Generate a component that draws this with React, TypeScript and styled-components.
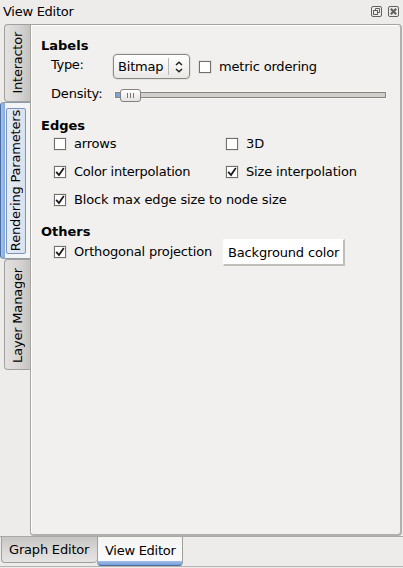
import React from "react";
import styled, { createGlobalStyle, css } from "styled-components";

const Global = createGlobalStyle`
  * { box-sizing: border-box; }
  html, body { margin: 0; padding: 0; background: #edeceb; overflow: hidden; }
  body { font-family: "DejaVu Sans", sans-serif; font-size: 13px; color: #000; line-height: 16px; }
`;

const Window = styled.div`
  width: 403px;
  height: 568px;
  display: flex;
  flex-direction: column;
  background: #edeceb;
  white-space: nowrap;
`;

const TitleBar = styled.header`
  height: 24px;
  padding: 0 3px 0 3px;
  display: flex;
  align-items: center;
  gap: 5px;
`;

const Text = styled.span<{ $track?: number }>`
  letter-spacing: ${(p) => p.$track ?? -0.19}px;
`;

const Title = styled(Text)`
  flex: 1;
`;

const Body = styled.div`
  height: 512px;
  display: flex;
  padding-right: 1px;
`;

const SideTabs = styled.nav`
  width: 31px;
  margin-right: -1px;
  display: flex;
  flex-direction: column;
  align-items: flex-end;
`;

const activeSide = css`
  width: 30px;
  margin-right: 1px;
  padding: 5px 4px 5px 1px;
  border: 1px solid #8e9bac;
  border-left-color: #4a6c9e;
  border-right: 0;
  border-radius: 4px 0 0 4px;
  background: linear-gradient(90deg, #a6c6f0 0, #82a8dc 4px, #f3f4f6 4px, #f3f4f6 100%);
`;

const idleSide = css`
  width: 27px;
  border: 1px solid #a2a19f;
  border-right-color: #9b9a98;
  border-radius: 4px 0 0 4px;
  background: linear-gradient(90deg, #e3e2e0, #d6d5d3 55%, #c5c4c1);
`;

const SideTab = styled.button<{ $active?: boolean; $h: number }>`
  height: ${(p) => p.$h}px;
  padding: 0;
  display: flex;
  align-items: center;
  justify-content: center;
  font: inherit;
  color: inherit;
  ${(p) => (p.$active ? activeSide : idleSide)}
`;

const Vertical = styled(Text)<{ $drop?: number }>`
  writing-mode: vertical-rl;
  transform: rotate(180deg);
  line-height: 16px;
  padding-bottom: ${(p) => p.$drop ?? 0}px;
`;

const FocusFrame = styled.span`
  width: 20px;
  height: 146px;
  margin-left: 4px;
  display: flex;
  align-items: center;
  justify-content: center;
  flex: none;
  border: 1px solid #7b94bb;
  border-radius: 2px;
  background: linear-gradient(90deg, #e5ebf4, #dae2ee);
`;

const Panel = styled.main`
  flex: 1;
  padding: 13px 0 0 10px;
  border: 1px solid #a5a4a1;
  border-bottom-width: 2px;
  border-right-width: 2px;
  border-bottom-color: #b1b0ae;
  border-right-color: #b1b0ae;
  border-radius: 0 4px 4px 4px;
  background: #f1f0ee;
  box-shadow: inset 1px 1px #fff;
`;

const Heading = styled.h2<{ $gap?: number }>`
  margin: ${(p) => p.$gap ?? 0}px 0 0;
  height: 16px;
  font-size: 13px;
  line-height: 16px;
  font-weight: bold;
`;

const Row = styled.div<{ $h: number; $indent?: number }>`
  height: ${(p) => p.$h}px;
  padding-left: ${(p) => p.$indent ?? 13}px;
  display: flex;
  align-items: center;
`;

const FieldName = styled(Text)<{ $w: number }>`
  width: ${(p) => p.$w}px;
  padding-bottom: 3px;
`;

const Select = styled.button`
  width: 77px;
  height: 25px;
  padding: 0 6px 0 4px;
  display: flex;
  align-items: center;
  border: 1px solid #898884;
  border-radius: 4px;
  background: linear-gradient(#fff, #f5f4f3 50%, #e9e8e6);
  box-shadow: 0 0 0 1px #e3e2df;
  font: inherit;
  color: inherit;
`;

const Divider = styled.span`
  width: 1px;
  height: 17px;
  margin-left: auto;
  margin-right: 6px;
  background: #b9b8b5;
`;

const CheckLabel = styled.label<{ $w?: number }>`
  width: ${(p) => (p.$w ? `${p.$w}px` : "auto")};
  display: flex;
  align-items: center;
  gap: 8px;
`;

const Box = styled.span`
  width: 12px;
  height: 12px;
  flex: none;
  display: flex;
  border: 1px solid #706f6b;
  background: #fff;
  box-shadow: 0 0 0 1px #e3e2df;
`;

const Track = styled.div`
  width: 271px;
  height: 6px;
  display: flex;
  align-items: center;
  border: 1px solid #858480;
  background: linear-gradient(90deg, #7da5da 6px, #d1d0cd 6px);
  box-shadow: 0 0 0 1px #f8f8f7;
`;

const Thumb = styled.span`
  width: 21px;
  height: 13px;
  margin-left: 4px;
  flex: none;
  display: flex;
  align-items: center;
  justify-content: center;
  gap: 2px;
  border: 1px solid #82817d;
  border-radius: 3px;
  background: linear-gradient(#fff, #e4e3e1);
`;

const Grip = styled.i`
  width: 1px;
  height: 5px;
  background: #777672;
`;

const ColorButton = styled.button`
  width: 122px;
  height: 27px;
  margin-top: 1px;
  padding: 2px 0 0 4px;
  border: 1px solid #fff;
  border-right: 2px solid #bfbebb;
  border-bottom: 2px solid #bfbebb;
  background: #fff;
  font: inherit;
  color: inherit;
  text-align: left;
`;

const BottomTabs = styled.footer`
  height: 31px;
  padding: 0 0 0 1px;
  display: flex;
  align-items: flex-start;
  border-top: 1px solid #aaa9a6;
  border-bottom: 1px solid #b5b4b1;
`;

const BottomTab = styled.button<{ $active?: boolean }>`
  width: ${(p) => (p.$active ? 86 : 96)}px;
  height: ${(p) => (p.$active ? 29 : 26)}px;
  padding: ${(p) => (p.$active ? "0 0 1px 7px" : "0 0 0 7px")};
  display: flex;
  align-items: center;
  border: 1px solid #a09f9c;
  border-top: 0;
  border-radius: 0 0 4px 4px;
  font: inherit;
  color: inherit;
  ${(p) =>
    p.$active
      ? css`
          border-bottom-color: #4a6c9e;
          background: linear-gradient(#f5f5f4 0, #fafafa 24px, #a0c0eb 24px, #779fd4 28px);
        `
      : css`
          border-right: 0;
          background: linear-gradient(#c6c5c3, #d8d7d5 50%, #e6e5e3);
        `}
`;

const Icon = styled.svg`
  display: block;
  flex: none;
`;

function Check({ on, track, w, children }: { on?: boolean; track?: number; w?: number; children: string }) {
  return (
    <CheckLabel $w={w}>
      <Box>
        {on && (
          <Icon width="10" height="10" viewBox="0 0 10 10">
            <path d="M1.2 4.8 L4 8 L8.8 1" fill="none" stroke="#1b1b1b" strokeWidth="1.8" />
          </Icon>
        )}
      </Box>
      <Text $track={track}>{children}</Text>
    </CheckLabel>
  );
}

function DockIcon({ kind }: { kind: "float" | "close" }) {
  return (
    <Icon width="12" height="12" viewBox="0 0 12 12" fill="none" stroke="#62615e">
      <rect x="0.5" y="0.5" width="10" height="10" rx="1.5" />
      {kind === "float" ? (
        <>
          <path d="M4.5 4.5V2.5H8.5V6.5H6.5" />
          <rect x="2.5" y="4.5" width="4" height="4" />
        </>
      ) : (
        <path d="M2.8 2.8L8.2 8.2M8.2 2.8L2.8 8.2" strokeWidth="2.2" />
      )}
    </Icon>
  );
}

export default function App() {
  return (
    <>
      <Global />
      <Window>
        <TitleBar>
          <Title $track={-0.27}>View Editor</Title>
          <DockIcon kind="float" />
          <DockIcon kind="close" />
        </TitleBar>
        <Body>
          <SideTabs>
            <SideTab $h={78}>
              <Vertical $track={-0.25}>Interactor</Vertical>
            </SideTab>
            <SideTab $active $h={157}>
              <FocusFrame>
                <Vertical>Rendering Parameters</Vertical>
              </FocusFrame>
            </SideTab>
            <SideTab $h={111}>
              <Vertical $drop={2}>Layer Manager</Vertical>
            </SideTab>
          </SideTabs>
          <Panel>
            <Heading>Labels</Heading>
            <Row $h={25} $indent={10}>
              <FieldName $w={62} $track={-0.35}>Type:</FieldName>
              <Select>
                <Text>Bitmap</Text>
                <Divider />
                <Icon width="8" height="12" viewBox="0 0 8 12">
                  <path d="M1 4L4 1.2L7 4M1 8L4 10.8L7 8" fill="none" stroke="#222" strokeWidth="1.5" />
                </Icon>
              </Select>
              <Row $h={25} $indent={9}>
                <Check>metric ordering</Check>
              </Row>
            </Row>
            <Row $h={32} $indent={10}>
              <FieldName $w={64}>Density:</FieldName>
              <Track>
                <Thumb>
                  <Grip />
                  <Grip />
                  <Grip />
                </Thumb>
              </Track>
            </Row>
            <Heading $gap={7}>Edges</Heading>
            <Row $h={20}>
              <Check w={172}>arrows</Check>
              <Check track={0}>3D</Check>
            </Row>
            <Row $h={36}>
              <Check on w={172} track={-0.25}>Color interpolation</Check>
              <Check on track={-0.16}>Size interpolation</Check>
            </Row>
            <Row $h={20}>
              <Check on track={-0.13}>Block max edge size to node size</Check>
            </Row>
            <Heading $gap={14}>Others</Heading>
            <Row $h={24}>
              <Check on w={169}>Orthogonal projection</Check>
              <ColorButton>
                <Text $track={-0.16}>Background color</Text>
              </ColorButton>
            </Row>
          </Panel>
        </Body>
        <BottomTabs>
          <BottomTab>
            <Text>Graph Editor</Text>
          </BottomTab>
          <BottomTab $active>
            <Text $track={-0.27}>View Editor</Text>
          </BottomTab>
        </BottomTabs>
      </Window>
    </>
  );
}
